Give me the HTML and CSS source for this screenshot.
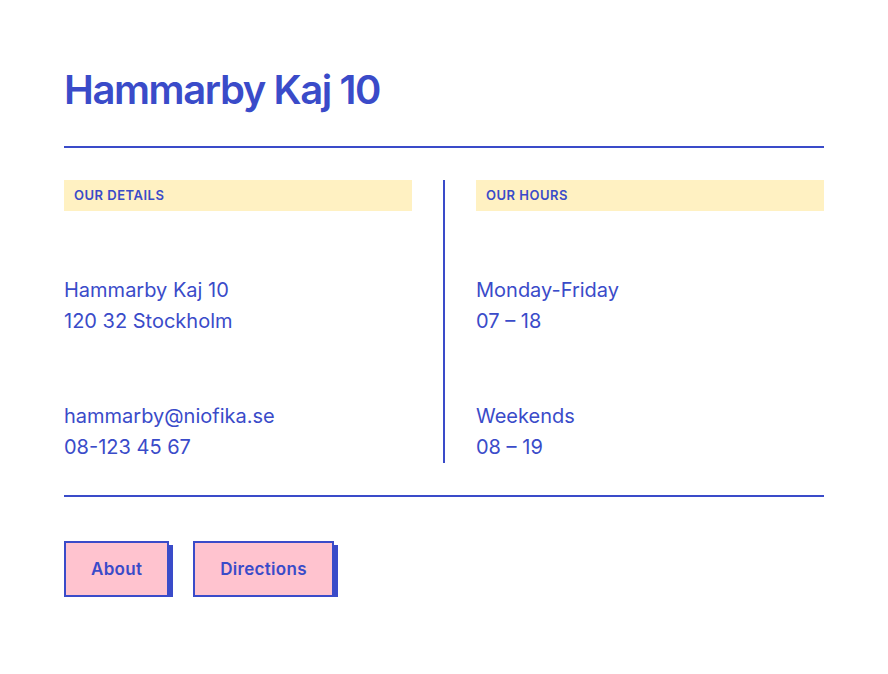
FILE: index.html
```html
<!DOCTYPE html>
<html lang="en">
<head>
    <meta charset="utf-8">
    <link rel="stylesheet" href="styles.css">
</head>
<body>
<div class="store">
    <h1 class="title">Hammarby Kaj 10</h1>
    <div class="rule"></div>
    <div class="info">
        <div class="col">
            <div class="label">Our details</div>
            <p class="block">Hammarby Kaj 10<br>120 32 Stockholm</p>
            <p class="block">hammarby@niofika.se<br>08-123 45 67</p>
        </div>
        <div class="divider"></div>
        <div class="col">
            <div class="label">Our hours</div>
            <p class="block">Monday-Friday<br>07 – 18</p>
            <p class="block">Weekends<br>08 – 19</p>
        </div>
    </div>
    <div class="rule"></div>
    <div class="actions">
        <a href="#" class="btn">About</a>
        <a href="#" class="btn">Directions</a>
    </div>
</div>
</body>
</html>
```

FILE: styles.css
```css
* {
    margin: 0;
    padding: 0;
    box-sizing: border-box;
}

body {
    background: #fff;
    color: #3a4bc9;
    font-family: Inter, "Noto Sans", sans-serif;
}

.store {
    width: 760px;
    margin: 0 64px;
    padding-top: 66px;
}

.title {
    font-size: 40px;
    line-height: 48px;
    font-weight: 600;
    letter-spacing: -1.4px;
}

.rule {
    height: 2px;
    background: #3a4bc9;
    margin-top: 32px;
}

.info {
    display: grid;
    grid-template-columns: 1fr 2px 1fr;
    column-gap: 31px;
    margin-top: 32px;
}

.divider {
    background: #3a4bc9;
}

.label {
    height: 31px;
    line-height: 31px;
    padding-left: 10px;
    background: #fff1c2;
    font-size: 13px;
    font-weight: 600;
    letter-spacing: 0.5px;
    text-transform: uppercase;
}

.block {
    margin-top: 64px;
    font-size: 20px;
    line-height: 31px;
}

.actions {
    display: flex;
    gap: 24px;
    margin-top: 44px;
}

.btn {
    display: block;
    height: 56px;
    line-height: 52px;
    padding: 0 25px;
    border: 2px solid #3a4bc9;
    background: #ffc3cf;
    box-shadow: 4px 4px 0 #3a4bc9;
    color: #3a4bc9;
    font-family: Inter, "Noto Sans", sans-serif;
    font-size: 17px;
    font-weight: 600;
    letter-spacing: 0.3px;
    text-decoration: none;
}
```
